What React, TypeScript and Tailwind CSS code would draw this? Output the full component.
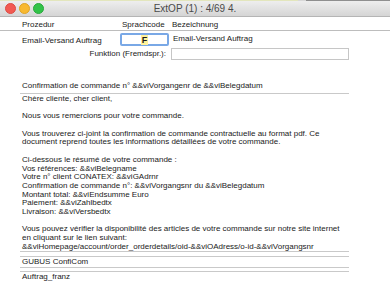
import React from "react";

const Line = () => <div className="ml-[20px] w-[329px] h-px bg-[#c9c9c9]" />;

const Lights = () => (
  <div className="flex items-center gap-[3px]">
    <div className="w-[11px] h-[11px] rounded-full bg-[#f25a52] border border-[#dd4b43]" />
    <div className="w-[11px] h-[11px] rounded-full bg-[#f8b930] border border-[#dfa425]" />
    <div className="w-[11px] h-[11px] rounded-full bg-[#32c348] border border-[#29a83c]" />
  </div>
);

export default function App() {
  const body = [
    "Chère cliente, cher client,",
    "",
    "Nous vous remercions pour votre commande.",
    "",
    "Vous trouverez ci-joint la confirmation de commande contractuelle au format pdf. Ce",
    "document reprend toutes les informations détaillées de votre commande.",
    "",
    "Ci-dessous le résumé de votre commande :",
    "Vos références: &&viBelegname",
    "Votre n° client CONATEX: &&viGAdrnr",
    "Confirmation de commande n°: &&viVorgangsnr du &&viBelegdatum",
    "Montant total: &&viEndsumme Euro",
    "Paiement: &&viZahlbedtx",
    "Livraison: &&viVersbedtx",
    "",
    "Vous pouvez vérifier la disponibilité des articles de votre commande sur notre site internet",
    "en cliquant sur le lien suivant:",
    "&&viHomepage/account/order_orderdetails/oid-&&viOAdress/o-id-&&viVorgangsnr",
  ];
  return (
    <div className="w-[390px] h-[300px] bg-white" style={{ fontFamily: '"Liberation Sans", Arial, sans-serif' }}>
      {/* top strip */}
      <div className="h-px flex">
        <div className="w-[298px] bg-[#e3e6bd]" />
        <div className="w-[8px] bg-[#d8d8d8]" />
        <div className="flex-1 bg-[#8f8f8f]" />
      </div>
      {/* title bar */}
      <div className="h-[16px] bg-linear-to-b from-[#eeeeee] to-[#d5d5d5] border-b border-[#b5b5b5] flex items-center">
        <div className="w-[60px] pl-[5px]">
          <Lights />
        </div>
        <div className="flex-1 text-center text-[10px] text-[#4a4a4a]">ExtOP (1) : 4/69 4.</div>
        <div className="w-[60px]" />
      </div>

      {/* header row */}
      <div className="h-[14px] border-b border-[#bdbdbd] flex items-center text-[8px] pt-[2px] text-[#1a1a1a]">
        <span className="ml-[22px] w-[100px]">Prozedur</span>
        <span className="w-[50px]">Sprachcode</span>
        <span>Bezeichnung</span>
      </div>

      {/* email row */}
      <div className="h-[16px] flex items-center text-[8px] text-[#1a1a1a]">
        <span className="ml-[22px] w-[98px] pt-[3px]">Email-Versand Auftrag</span>
        <div className="w-[49px] h-[13px] mt-[1px] border-2 border-[#79a8e6] rounded-[2px] bg-white flex items-center justify-center">
          <span className="bg-[#fff29a] px-[1px] font-bold text-[9px] leading-[10px]">F</span>
        </div>
        <span className="ml-[4px] -mt-[1px]">Email-Versand Auftrag</span>
      </div>

      {/* Funktion row */}
      <div className="h-[14px] flex items-center text-[8px] text-[#1a1a1a]">
        <span className="w-[167px] text-right pr-[1px]">Funktion (Fremdspr.):</span>
        <div className="ml-[4px] w-[178px] h-[12px] border border-[#c6c6c6] bg-white" />
      </div>

      {/* subject */}
      <div className="mt-[17px] h-[15px] flex items-center pl-[22px] text-[8px] text-[#1a1a1a]">
        Confirmation de commande n° &amp;&amp;viVorgangenr de &amp;&amp;viBelegdatum
      </div>
      <Line />

      {/* body */}
      <div className="pl-[22px] pt-[1px] text-[8px] leading-[8.7px] h-[157px] text-[#1a1a1a]">
        {body.map((l, i) => (
          <div key={i} className="h-[8.7px] whitespace-nowrap">
            {l}
          </div>
        ))}
      </div>
      <Line />
      <div className="h-[4px]" />
      <Line />
      <div className="h-[10px] flex items-center pl-[22px] text-[8px] text-[#1a1a1a]">GUBUS ConfiCom</div>
      <Line />
      <div className="h-[3px]" />
      <Line />
      <div className="h-[10px] flex items-center pl-[22px] text-[8px] text-[#1a1a1a]">Auftrag_franz</div>
    </div>
  );
}
